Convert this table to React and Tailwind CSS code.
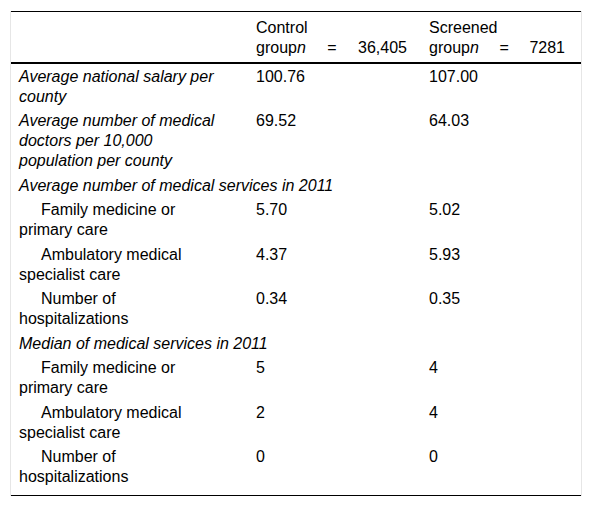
import React from 'react';

// table rows
const rows = [
  { type: 'row', label: 'Average national salary per county', italic: true, a: '100.76', b: '107.00' },
  { type: 'row', label: 'Average number of medical doctors per 10,000 population per county', italic: true, a: '69.52', b: '64.03' },
  { type: 'section', label: 'Average number of medical services in 2011' },
  { type: 'row', label: 'Family medicine or primary care', sub: true, a: '5.70', b: '5.02' },
  { type: 'row', label: 'Ambulatory medical specialist care', sub: true, a: '4.37', b: '5.93' },
  { type: 'row', label: 'Number of hospitalizations', sub: true, a: '0.34', b: '0.35' },
  { type: 'section', label: 'Median of medical services in 2011' },
  { type: 'row', label: 'Family medicine or primary care', sub: true, a: '5', b: '4' },
  { type: 'row', label: 'Ambulatory medical specialist care', sub: true, a: '2', b: '4' },
  { type: 'row', label: 'Number of hospitalizations', sub: true, a: '0', b: '0', last: true },
];

const GroupHead = ({ title, n }) => (
  <>
    <div>{title}</div>
    <div className="flex justify-between">
      <span>
        group<i>n</i>
      </span>
      <span>=</span>
      <span>{n}</span>
    </div>
  </>
);

export default function App() {
  return (
    <div
      className="bg-white pt-[11px] px-[10px] pb-[12px] text-black text-[16px] leading-[20px]"
      style={{ fontFamily: '"Liberation Sans", Arial, sans-serif' }}
    >
      <div className="border-x border-[#e6e6e6]">
        <table className="w-full table-fixed border-collapse border-t border-b border-black">
          <colgroup>
            <col className="w-[237px]" />
            <col className="w-[173px]" />
            <col />
          </colgroup>
          <thead>
            <tr className="border-b-2 border-black">
              <th className="pl-2 pr-[28px] pt-[6px] pb-[4px]"></th>
              <th className="pl-2 pr-[14px] pt-[6px] pb-[4px] text-left font-normal align-top">
                <GroupHead title="Control" n="36,405" />
              </th>
              <th className="pl-2 pr-4 pt-[6px] pb-[4px] text-left font-normal align-top">
                <GroupHead title="Screened" n="7281" />
              </th>
            </tr>
          </thead>
          <tbody>
            {rows.map((r, i) =>
              r.type === 'section' ? (
                <tr key={i}>
                  <td colSpan={3} className="pl-2 pt-[2.5px] pb-[2px] italic">
                    {r.label}
                  </td>
                </tr>
              ) : (
                <tr key={i} className={`align-top ${r.last ? '[&>td]:pb-[8px]' : '[&>td]:pb-[2px]'}`}>
                  <td className={`pl-2 pr-[28px] pt-[2.5px] ${r.italic ? 'italic' : ''} ${r.sub ? 'indent-[22px]' : ''}`}>
                    {r.label}
                  </td>
                  <td className="pl-2 pr-[14px] pt-[2.5px]">{r.a}</td>
                  <td className="pl-2 pr-4 pt-[2.5px]">{r.b}</td>
                </tr>
              )
            )}
          </tbody>
        </table>
      </div>
    </div>
  );
}
